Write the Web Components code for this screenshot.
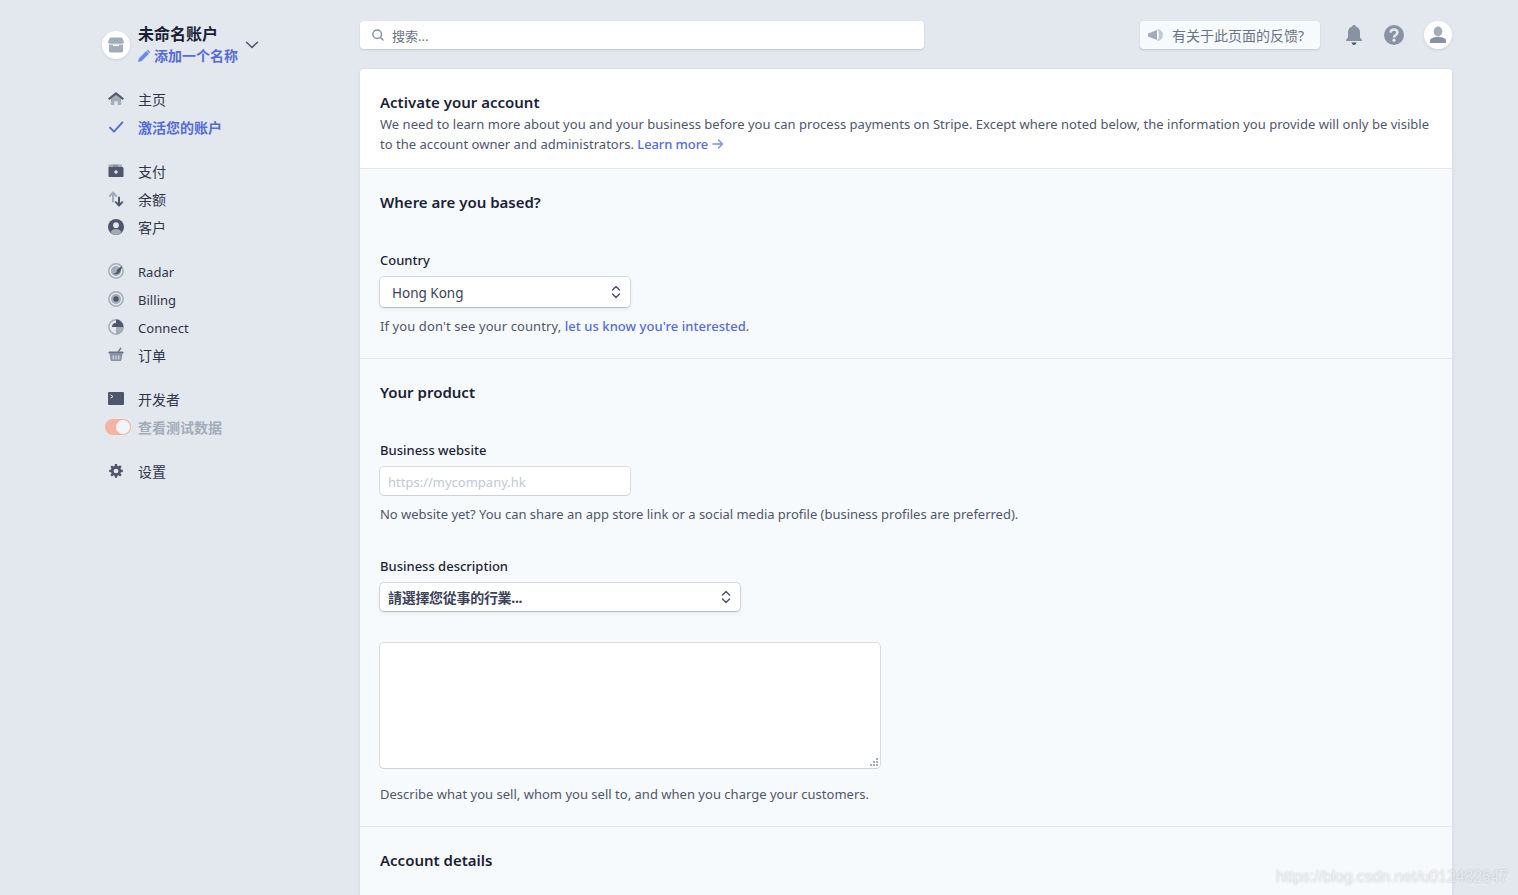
<!DOCTYPE html>
<html lang="zh">
<head>
<meta charset="utf-8">
<title>Activate your account</title>
<style>
  html, body { margin: 0; height: 100%; overflow: hidden; background: #e3e8ee; }
  body { font-family: "Noto Sans", "Noto Sans CJK SC", sans-serif; }
</style>
</head>
<body>
<app-page>
  <side-nav slot="side">
    <nav-item icon="home">主页</nav-item>
    <nav-item icon="check" active>激活您的账户</nav-item>
    <nav-item icon="pay" gap>支付</nav-item>
    <nav-item icon="balance">余额</nav-item>
    <nav-item icon="customer">客户</nav-item>
    <nav-item icon="radar" gap latin>Radar</nav-item>
    <nav-item icon="billing" latin>Billing</nav-item>
    <nav-item icon="connect" latin>Connect</nav-item>
    <nav-item icon="basket">订单</nav-item>
    <nav-item icon="dev" gap>开发者</nav-item>
    <nav-item icon="toggle" muted>查看测试数据</nav-item>
    <nav-item icon="gear" gap>设置</nav-item>
  </side-nav>
  <top-bar slot="top"></top-bar>
  <form-card slot="main">
    <form-section plain>
      <h-title>Activate your account</h-title>
      <field-help style="margin-top:2px;letter-spacing:.024px">We need to learn more about you and your business before you can process payments on Stripe. Except where noted below, the information you provide will only be visible to the account owner and administrators. <text-link arrow style="letter-spacing:-.1px">Learn more</text-link></field-help>
    </form-section>
    <form-section>
      <h-title>Where are you based?</h-title>
      <field-label style="margin-top:38px">Country</field-label>
      <select-box w="250" h="30" pad="12">Hong Kong</select-box>
      <field-help style="margin-top:9px;letter-spacing:.1px">If you don't see your country, <text-link style="letter-spacing:.05px">let us know you're interested</text-link>.</field-help>
    </form-section>
    <form-section>
      <h-title>Your product</h-title>
      <field-label style="margin-top:38px">Business website</field-label>
      <text-box placeholder="https://mycompany.hk"></text-box>
      <field-help style="margin-top:9px;letter-spacing:-.02px">No website yet? You can share an app store link or a social media profile (business profiles are preferred).</field-help>
      <field-label style="margin-top:32px">Business description</field-label>
      <select-box w="360" h="28" pad="8" strong>請選擇您從事的行業...</select-box>
      <area-box></area-box>
      <field-help style="margin-top:16px;letter-spacing:.013px">Describe what you sell, whom you sell to, and when you charge your customers.</field-help>
    </form-section>
    <form-section>
      <h-title>Account details</h-title>
    </form-section>
  </form-card>
  <water-mark slot="over">https://blog.csdn.net/u012482647</water-mark>
</app-page>

<script>
const ICONS = {
  home: '<path fill="#a3acb9" d="M2.800 7.500 8 3.300l5.200 4.200V14H9.700v-3.700H6.300V14H2.800z"/><path fill="#4f566b" d="M8 1 0 7.400 1.300 9 8 3.700 14.700 9 16 7.400z"/>',
  check: '<path fill="none" stroke="#556cd6" stroke-width="2" stroke-linecap="round" stroke-linejoin="round" d="M2 8.600 6 12.600 14.400 3.400"/>',
  pay: '<path fill="#a3acb9" d="M.5 2.500c0-.6.400-1 1-1h11.500c.6 0 1 .4 1 1V4H.5z"/><path fill="#4f566b" d="M5 1.500h5v2.500H5z" opacity=".35"/><path fill="#4f566b" d="M.5 4H14c.8 0 1.500.7 1.500 1.500V13c0 .6-.5 1-1 1h-13c-.6 0-1-.4-1-1z"/><circle cx="8" cy="9" r="1.700" fill="#e3e8ee"/>',
  balance: '<path fill="none" stroke="#a3acb9" stroke-width="2" stroke-linecap="round" stroke-linejoin="round" d="M5 10.500V1.800M1.800 5 5 1.500 8.200 5"/><path fill="none" stroke="#4f566b" stroke-width="2" stroke-linecap="round" stroke-linejoin="round" d="M11 6.500v8M7.800 11.200 11 14.700l3.200-3.500"/>',
  customer: '<circle cx="8" cy="8" r="8" fill="#4f566b"/><circle cx="8" cy="6.200" r="2.900" fill="#e3e8ee"/><path fill="#a3acb9" d="M2.600 13.200C3.600 11 5.600 10 8 10s4.400 1 5.400 3.200A8 8 0 0 1 8 16a8 8 0 0 1-5.400-2.800z"/>',
  radar: '<circle cx="8" cy="8" r="7.200" fill="none" stroke="#a3acb9" stroke-width="1.500"/><circle cx="8" cy="8" r="5" fill="#a3acb9"/><path fill="#4f566b" d="M14 2.500c-.3 4-1.500 6.800-4 8.300-1.700 1-3.800.7-4.300-.6 1.600.2 2.800-.3 3-1.700.2-1.500 1.200-2.600 2.400-3.400C12 4.500 13 3.500 14 2.500z"/>',
  billing: '<circle cx="8" cy="8" r="7.200" fill="none" stroke="#a3acb9" stroke-width="1.500"/><circle cx="8" cy="8" r="5" fill="#a3acb9"/><circle cx="8" cy="8" r="2.700" fill="#4f566b"/>',
  connect: '<circle cx="8" cy="8" r="7.200" fill="none" stroke="#a3acb9" stroke-width="1.500"/><path fill="#4f566b" d="M4 8a4 4 0 0 1 4-4V.6A7.400 7.400 0 0 1 15.400 8z"/><path fill="#a3acb9" d="M8 8h7.200A7.200 7.200 0 0 1 8 15.200z"/>',
  basket: '<path fill="#697386" d="M9.500 4.800 12.300.5l1.200.8-2.400 3.500z"/><rect x=".5" y="4.600" width="15" height="2.200" rx="1" fill="#697386"/><path fill="#8792a2" d="M1.600 7h12.800l-1 6c-.1.600-.5 1-1 1H3.600c-.5 0-.9-.4-1-1z"/><path fill="#e3e8ee" d="M4.700 8.500h1.100v4H4.700zM7.450 8.500h1.100v4H7.450zM10.200 8.500h1.100v4H10.200z"/>',
  dev: '<rect y="1" width="16" height="13" rx="1" fill="#4f566b"/><path fill="none" stroke="#e3e8ee" stroke-width="1" d="M2.500 3.800 5 5.500 2.500 7.200"/>',
  gear: '<g transform="translate(1 1) scale(.875)"><path fill="#4f566b" fill-rule="evenodd" d="M6.800 0h2.400l.4 2.200 1.300.5 1.800-1.300 1.700 1.700-1.300 1.800.5 1.300 2.200.4v2.400l-2.200.4-.5 1.300 1.300 1.800-1.700 1.700-1.800-1.300-1.300.5-.4 2.200H6.800l-.4-2.200-1.300-.5-1.800 1.300-1.700-1.700 1.300-1.800-.5-1.300L.2 9.200V6.800l2.200-.4.500-1.300L1.600 3.300l1.700-1.700 1.800 1.300 1.300-.5zM8 5.300a2.700 2.700 0 1 0 0 5.400 2.700 2.700 0 0 0 0-5.400z"/></g>'
};

class AppPage extends HTMLElement {
  constructor() {
    super();
    this.attachShadow({ mode: "open" });
    this.shadowRoot.innerHTML = `
      <style>
        :host { display: block; position: relative; height: 895px; overflow: hidden; }
        .grid { display: grid; grid-template-columns: 102px 258px 1092px; }
        .side { grid-column: 2; grid-row: 1 / span 2; }
        .top { grid-column: 3; }
        .main { grid-column: 3; padding-top: 20px; }
      </style>
      <div class="grid">
        <div class="side"><slot name="side"></slot></div>
        <div class="top"><slot name="top"></slot></div>
        <div class="main"><slot name="main"></slot></div>
      </div>
      <slot name="over"></slot>`;
  }
}

class SideNav extends HTMLElement {
  constructor() {
    super();
    this.attachShadow({ mode: "open" });
    this.shadowRoot.innerHTML = `
      <style>
        :host { display: block; padding-top: 24px; }
        .acct { display: flex; align-items: center; height: 42px; margin-bottom: 19px; }
        .logo { width: 28px; height: 28px; border-radius: 50%; background: #fff; box-shadow: 0 1px 3px rgba(60,66,87,.15); display: flex; align-items: center; justify-content: center; margin-right: 8px; }
        .names { width: 107px; }
        .name { font-size: 16px; line-height: 20px; color: #1a1f36; font-weight: 700; }
        .add { font-size: 14px; line-height: 20px; color: #556cd6; font-weight: 700; display: flex; align-items: center; gap: 4px; margin-top: 2px; }
      </style>
      <div class="acct">
        <div class="logo"><svg width="18" height="18" viewBox="0 0 18 18"><path fill="#a3acb9" d="M3 1.500h12l2 4.200c0 1.200-.8 2-2 2H3c-1.200 0-2-.8-2-2z"/><path fill="#a3acb9" d="M2 8.600h14V15a1.500 1.500 0 0 1-1.500 1.500h-11A1.500 1.500 0 0 1 2 15z"/><path fill="#fff" d="M6 8.600h6V10H6z"/></svg></div>
        <div class="names">
          <div class="name">未命名账户</div>
          <div class="add"><svg width="12" height="12" viewBox="0 0 12 12"><path fill="#6c8aee" d="M0 12l.8-3.500L8.300 1l2.700 2.700-7.500 7.500zM9 .3c.4-.4 1-.4 1.400 0l1.300 1.300c.4.400.4 1 0 1.400l-.3.300L8.700.6z"/></svg>添加一个名称</div>
        </div>
        <svg width="14" height="8" viewBox="0 0 14 8"><path fill="none" stroke="#4f566b" stroke-width="1.500" stroke-linecap="round" stroke-linejoin="round" d="M1.500 1.200 7 6.500l5.500-5.300"/></svg>
      </div>
      <slot></slot>`;
  }
}

class NavItem extends HTMLElement {
  constructor() {
    super();
    this.attachShadow({ mode: "open" });
  }
  connectedCallback() {
    const name = this.getAttribute("icon");
    const icon = name === "toggle"
      ? '<span class="toggle"><span class="knob"></span></span>'
      : `<svg width="16" height="16" viewBox="0 0 16 16">${ICONS[name]}</svg>`;
    this.shadowRoot.innerHTML = `
      <style>
        :host { display: flex; align-items: center; height: 28px; font-size: 14px; color: #2f3549; }
        :host([gap]) { margin-top: 16px; }
        :host([latin]) { font-size: 13px; letter-spacing: .03px; }
        :host([latin]) .label { padding-top: 2px; }
        :host([active]) { color: #556cd6; font-weight: 700; }
        :host([muted]) { color: #a3acb9; font-weight: 700; }
        .ic { width: 36px; padding-left: 6px; box-sizing: border-box; display: flex; align-items: center; }
        :host([icon="toggle"]) .ic { padding-left: 3px; }
        .toggle { display: block; width: 26px; height: 16px; border-radius: 8px; background: #f5b3a3; position: relative; }
        .knob { position: absolute; right: 1px; top: 1px; width: 14px; height: 14px; border-radius: 50%; background: #f1f4f8; }
      </style>
      <span class="ic">${icon}</span><span class="label"><slot></slot></span>`;
  }
}

class TopBar extends HTMLElement {
  constructor() {
    super();
    this.attachShadow({ mode: "open" });
    this.shadowRoot.innerHTML = `
      <style>
        :host { display: flex; align-items: center; height: 28px; padding-top: 21px; }
        .search { width: 564px; height: 28px; box-sizing: border-box; background: #fff; border-radius: 4px; box-shadow: 0 1px 2px rgba(60,66,87,.2); display: flex; align-items: center; padding-left: 12px; gap: 8px; font-size: 13px; color: #697386; }
        .feedback { margin-left: 216px; width: 180px; height: 28px; box-sizing: border-box; background: #f7fafc; border-radius: 4px; box-shadow: 0 1px 2px rgba(60,66,87,.2); display: flex; align-items: center; padding-left: 8px; gap: 8px; font-size: 14px; color: #697386; white-space: nowrap; }
        .bell { margin-left: 24px; }
        .help { margin-left: 20px; }
        .user { margin-left: 20px; width: 28px; height: 28px; border-radius: 50%; background: #fff; box-shadow: 0 1px 3px rgba(60,66,87,.15); display: flex; align-items: center; justify-content: center; }
      </style>
      <div class="search"><svg width="12" height="12" viewBox="0 0 12 12"><circle cx="5.200" cy="5.200" r="4.300" fill="none" stroke="#8792a2" stroke-width="1.500"/><path stroke="#8792a2" stroke-width="1.500" stroke-linecap="round" d="M8.500 8.500 11 11"/></svg>搜索...</div>
      <div class="feedback"><svg width="16" height="14" viewBox="0 0 16 14"><path fill="#a3acb9" d="M0 5.500l9-3.500v10L0 8.500z"/><path fill="#c1c9d2" d="M9 1c3 0 6 2.500 6 6s-3 6-6 6c1.500-1.500 2-3.500 2-6s-.5-4.500-2-6z"/></svg>有关于此页面的反馈?</div>
      <svg class="bell" width="20" height="22" viewBox="0 0 20 22"><path fill="#8792a2" d="M10 1c1 0 1.800.7 1.800 1.600C15 3.400 16 6 16 9v4.500l2 2.500v1H2v-1l2-2.500V9c0-3 1-5.600 4.200-6.400C8.200 1.700 9 1 10 1z"/><path fill="#4f566b" d="M7.500 18.500h5C12.300 20 11.200 21 10 21s-2.300-1-2.500-2.500z"/></svg>
      <svg class="help" width="20" height="20" viewBox="0 0 20 20"><circle cx="10" cy="10" r="10" fill="#8792a2"/><path fill="none" stroke="#e3e8ee" stroke-width="2.600" d="M6.600 7.600C6.700 5.600 8.200 4.500 10 4.500c2 0 3.400 1.200 3.400 2.900 0 2.700-3.400 2.400-3.400 5"/><circle cx="10" cy="15.200" r="1.600" fill="#e3e8ee"/></svg>
      <div class="user"><svg width="20" height="18" viewBox="0 0 20 18"><ellipse cx="10" cy="5.500" rx="4.300" ry="5" fill="#a3acb9"/><path fill="#8792a2" d="M2 17v-2.500c0-2 3.500-3.500 8-3.500s8 1.500 8 3.500V17z"/></svg></div>`;
  }
}

class FormCard extends HTMLElement {
  constructor() {
    super();
    this.attachShadow({ mode: "open" });
    this.shadowRoot.innerHTML = `
      <style>
        :host { display: block; background: #f7fafc; border-radius: 4px 4px 0 0; box-shadow: 0 2px 5px rgba(60,66,87,.08), 0 0 0 1px rgba(60,66,87,.02); overflow: hidden; }
      </style>
      <slot></slot>`;
  }
}

class FormSection extends HTMLElement {
  constructor() {
    super();
    this.attachShadow({ mode: "open" });
    this.shadowRoot.innerHTML = `
      <style>
        :host { display: block; padding: 23px 20px 22px; border-bottom: 1px solid #e3e8ee; background: #f7fafc; }
        :host([plain]) { background: #fff; padding: 23px 20px 14px; }
        :host(:last-child) { border-bottom: 0; padding-bottom: 80px; }
      </style>
      <slot></slot>`;
  }
}

class HTitle extends HTMLElement {
  constructor() {
    super();
    this.attachShadow({ mode: "open" });
    this.shadowRoot.innerHTML = `
      <style>
        :host { display: block; font-size: 15px; line-height: 20px; font-weight: 600; color: #1a1f36; }
      </style>
      <slot></slot>`;
  }
}

class FieldLabel extends HTMLElement {
  constructor() {
    super();
    this.attachShadow({ mode: "open" });
    this.shadowRoot.innerHTML = `
      <style>
        :host { display: block; font-size: 13px; line-height: 20px; font-weight: 500; color: #1a1f36; margin-bottom: 7px; }
      </style>
      <slot></slot>`;
  }
}

class FieldHelp extends HTMLElement {
  constructor() {
    super();
    this.attachShadow({ mode: "open" });
    this.shadowRoot.innerHTML = `
      <style>
        :host { display: block; font-size: 13px; line-height: 20px; color: #4f566b; }
      </style>
      <slot></slot>`;
  }
}

class TextLink extends HTMLElement {
  constructor() {
    super();
    this.attachShadow({ mode: "open" });
  }
  connectedCallback() {
    const arrow = this.hasAttribute("arrow")
      ? '<svg width="12" height="12" viewBox="0 0 12 12" style="margin-left:4px;vertical-align:-1px"><path fill="none" stroke="#7b8fe8" stroke-width="1.400" stroke-linecap="round" stroke-linejoin="round" d="M1 6h9.500M6.500 2l4 4-4 4"/></svg>'
      : "";
    this.shadowRoot.innerHTML = `
      <style>
        :host { color: #556cd6; font-weight: 500; }
      </style>
      <slot></slot>${arrow}`;
  }
}

class SelectBox extends HTMLElement {
  constructor() {
    super();
    this.attachShadow({ mode: "open" });
  }
  connectedCallback() {
    const w = this.getAttribute("w"), h = this.getAttribute("h"), pad = this.getAttribute("pad");
    this.shadowRoot.innerHTML = `
      <style>
        :host { display: flex; align-items: center; justify-content: space-between; box-sizing: border-box; width: ${w}px; height: ${h}px; padding: 0 9px 0 ${pad}px; background: #fff; border-radius: 4px; box-shadow: 0 0 0 1px rgba(60,66,87,.16), 0 1px 1px rgba(0,0,0,.12), 0 2px 5px rgba(60,66,87,.08); font-size: 13.5px; color: #3c4257; }
        :host([strong]) { font-weight: 700; font-size: 14px; letter-spacing: -.3px; }
        span { padding-top: 2px; }
        :host([strong]) span { padding-top: 0; }
      </style>
      <span><slot></slot></span>
      <svg width="10" height="14" viewBox="0 0 10 14"><path fill="none" stroke="#4f566b" stroke-width="1.500" stroke-linecap="round" stroke-linejoin="round" d="M1.500 5 5 1.500 8.500 5M1.500 9 5 12.500 8.500 9"/></svg>`;
  }
}

class TextBox extends HTMLElement {
  constructor() {
    super();
    this.attachShadow({ mode: "open" });
  }
  connectedCallback() {
    this.shadowRoot.innerHTML = `
      <style>
        :host { display: block; width: 250px; height: 28px; }
        input { display: block; box-sizing: border-box; width: 100%; height: 100%; padding: 2px 8px 0; border: 0; border-radius: 4px; background: #fff; box-shadow: 0 0 0 1px rgba(60,66,87,.16), 0 1px 1px rgba(0,0,0,.06); font: 13px "Noto Sans", sans-serif; }
        input::placeholder { color: #c1c9d2; opacity: 1; }
      </style>
      <input placeholder="${this.getAttribute("placeholder")}">`;
  }
}

class AreaBox extends HTMLElement {
  constructor() {
    super();
    this.attachShadow({ mode: "open" });
    this.shadowRoot.innerHTML = `
      <style>
        :host { display: block; width: 500px; height: 125px; margin-top: 32px; position: relative; background: #fff; border-radius: 4px; box-shadow: 0 0 0 1px rgba(60,66,87,.16), 0 1px 1px rgba(0,0,0,.06); }
        svg { position: absolute; right: 2px; bottom: 2px; }
      </style>
      <svg width="8" height="8" viewBox="0 0 8 8" fill="#a3acb9"><rect x="6" y="0" width="2" height="2"/><rect x="3" y="3" width="2" height="2"/><rect x="6" y="3" width="2" height="2"/><rect x="0" y="6" width="2" height="2"/><rect x="3" y="6" width="2" height="2"/><rect x="6" y="6" width="2" height="2"/></svg>`;
  }
}

class WaterMark extends HTMLElement {
  constructor() {
    super();
    this.attachShadow({ mode: "open" });
    this.shadowRoot.innerHTML = `
      <style>
        :host { position: absolute; right: 10px; bottom: 8px; font: 15.7px/20px "Liberation Sans", sans-serif; color: rgba(255,255,255,.6); text-shadow: 0 0 2px rgba(60,66,87,.3); }
      </style>
      <slot></slot>`;
  }
}

customElements.define("app-page", AppPage);
customElements.define("side-nav", SideNav);
customElements.define("nav-item", NavItem);
customElements.define("top-bar", TopBar);
customElements.define("form-card", FormCard);
customElements.define("form-section", FormSection);
customElements.define("h-title", HTitle);
customElements.define("field-label", FieldLabel);
customElements.define("field-help", FieldHelp);
customElements.define("text-link", TextLink);
customElements.define("select-box", SelectBox);
customElements.define("text-box", TextBox);
customElements.define("area-box", AreaBox);
customElements.define("water-mark", WaterMark);
</script>
</body>
</html>
